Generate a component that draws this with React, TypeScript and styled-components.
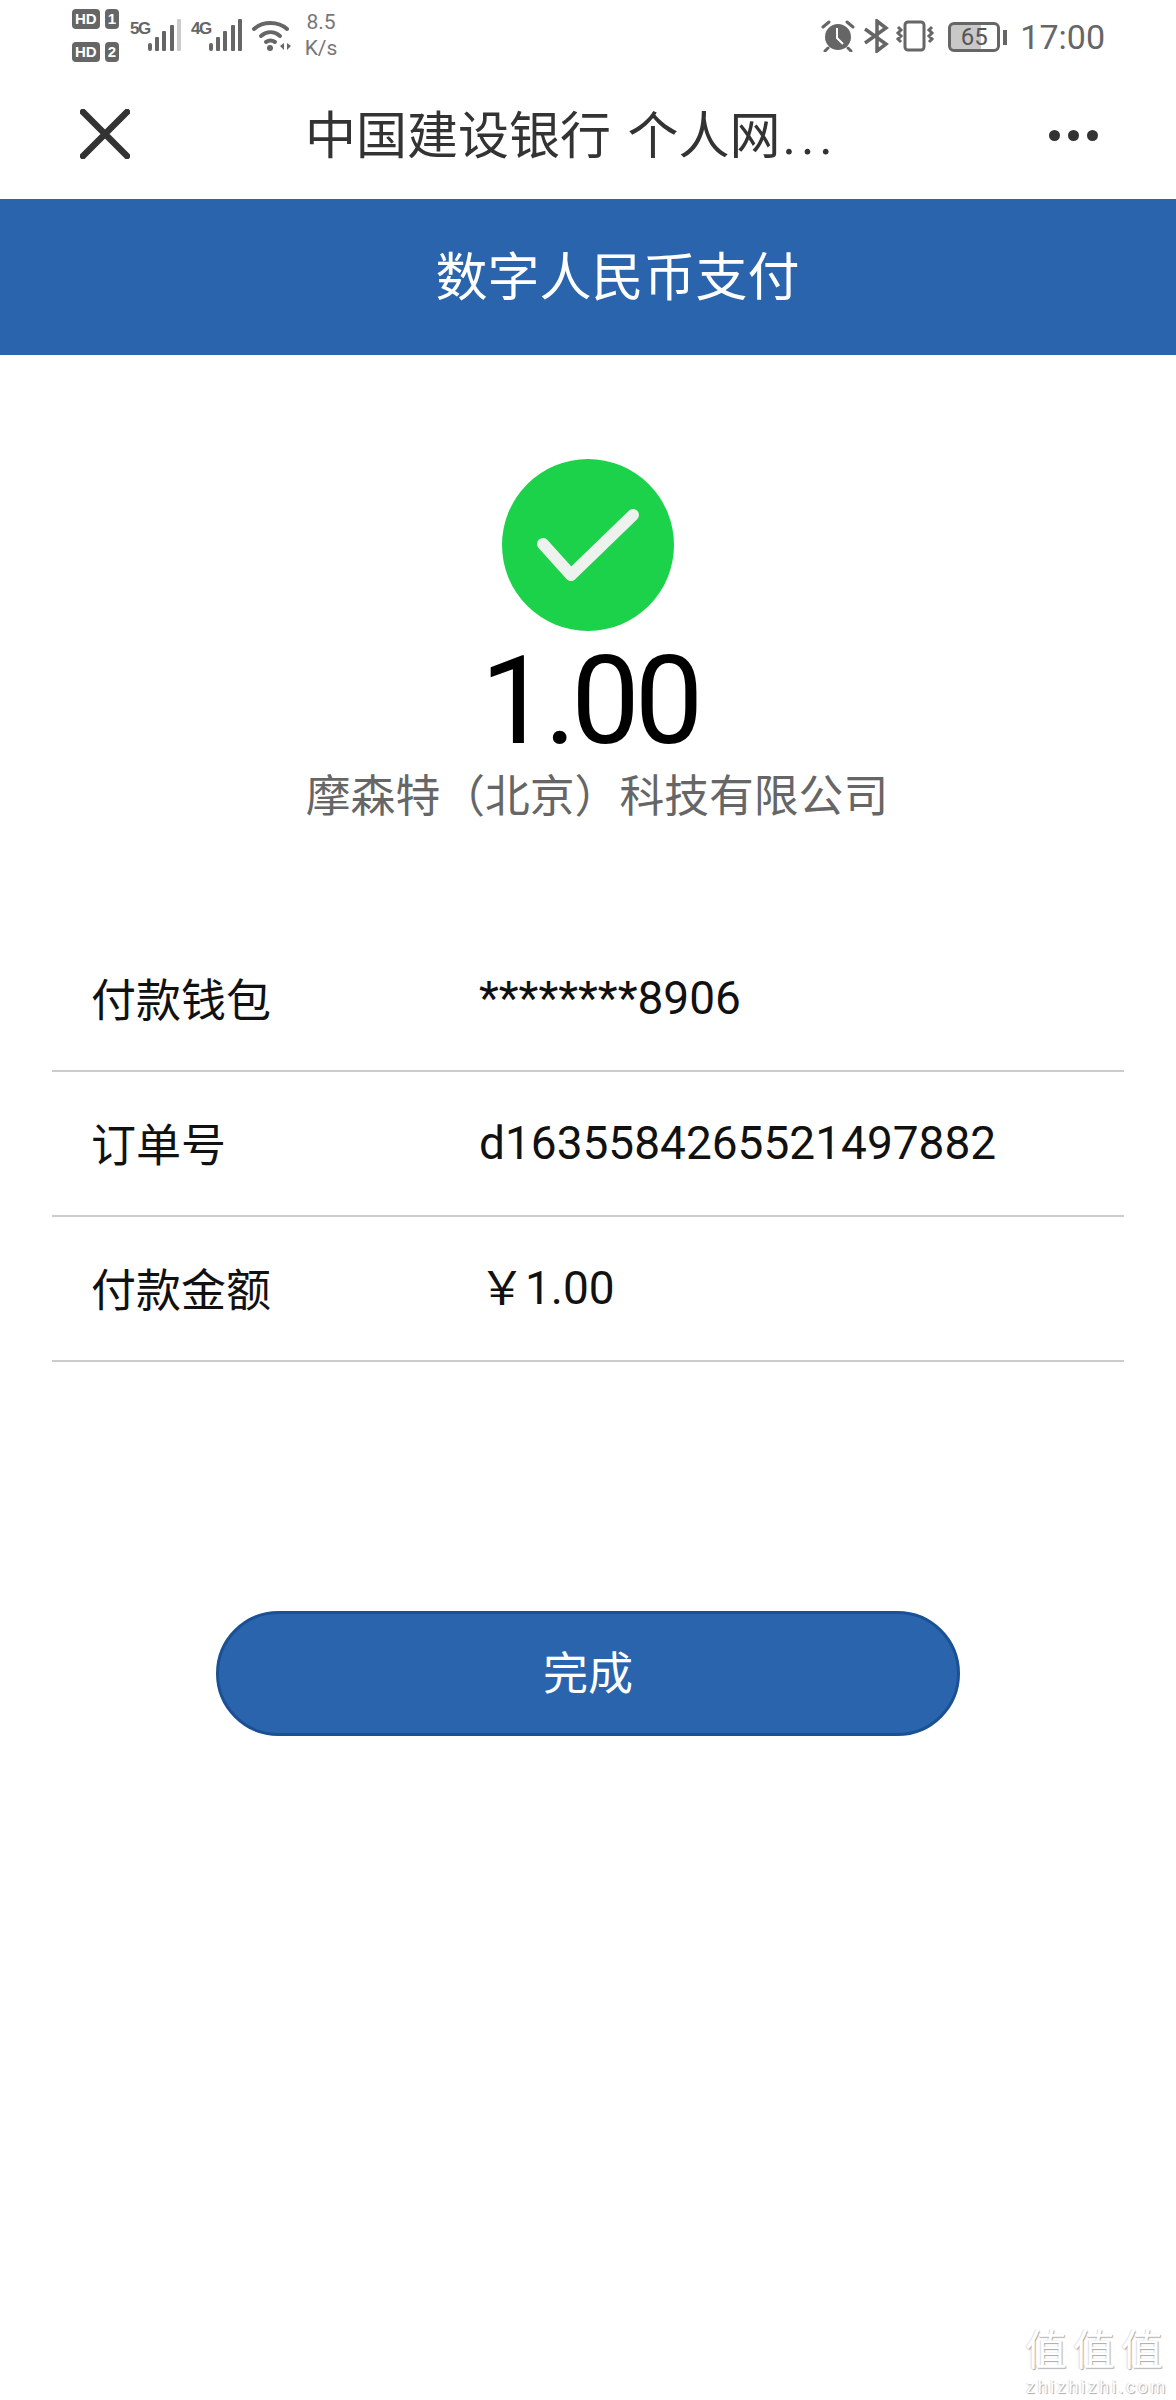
import React from 'react'
import styled, { createGlobalStyle } from 'styled-components'

const GlobalStyle = createGlobalStyle`
  html, body { margin: 0; padding: 0; background: #fff; }
  body { font-family: Roboto, "Noto Sans CJK SC", sans-serif; }
`

const Page = styled.div`
  position: relative;
  width: 1176px;
  height: 2400px;
  overflow: hidden;
  background: #fff;
`

const StatusBar = styled.div`
  height: 72px;
  display: flex;
  align-items: flex-start;
  justify-content: space-between;
  padding: 0 71px 0 72px;
  color: #666;
`

const StatusGroup = styled.div`
  display: flex;
  align-items: center;
  height: 72px;
`

const SimColumn = styled.div`
  display: flex;
  flex-direction: column;
  gap: 13px;
  margin-right: 11px;
  margin-top: -1px;
`

const SimRow = styled.div`
  display: flex;
  gap: 5px;
`

const SimBadge = styled.span<{ $wide?: boolean }>`
  display: block;
  height: 20px;
  padding: 0 3px;
  min-width: ${(p) => (p.$wide ? '20px' : '8px')};
  background: #666;
  color: #fff;
  font: 700 15px/20px "Liberation Sans", sans-serif;
  border-radius: 4px;
  text-align: center;
`

const Signal = styled.div`
  display: flex;
  align-items: flex-start;
  margin-right: 9px;
  margin-top: -3px;
`

const NetLabel = styled.span`
  font: 700 17px/20px "Liberation Sans", sans-serif;
  letter-spacing: -1.5px;
  color: #666;
  width: 18px;
`

const Speed = styled.div`
  margin-left: 11px;
  margin-top: -2px;
  font: 400 21px/26px Roboto, sans-serif;
  color: #777;
  text-align: center;
  width: 36px;
`

const IconGap = styled.span<{ $size: number }>`
  display: block;
  width: ${(p) => p.$size}px;
`

const Clock = styled.span`
  font: 400 34px/40px Roboto, sans-serif;
  color: #666;
  margin-left: 13px;
  margin-top: 1px;
`

const BatteryBox = styled.div`
  width: 52px;
  height: 30px;
  box-sizing: border-box;
  border: 3px solid #666;
  border-radius: 6px;
  margin-left: 13px;
  margin-top: 2px;
  text-align: center;
  font: 400 24px/24px Roboto, sans-serif;
  color: #555;
  background: linear-gradient(90deg, #c8c8c8 65%, #fff 65%);
`

const BatteryNub = styled.div`
  width: 4px;
  height: 15px;
  background: #666;
  margin-left: 3px;
  margin-top: 3px;
`

const NavBar = styled.div`
  height: 127px;
  display: flex;
  align-items: center;
  padding: 0 78px 0 80px;
  box-sizing: border-box;
`

const CloseButton = styled.div`
  width: 50px;
  height: 50px;
  margin-top: -4px;
`

const NavTitle = styled.div`
  flex: 1;
  margin-left: 175px;
  margin-top: -2px;
  font: 400 51px/70px "Noto Sans CJK SC", sans-serif;
  color: #333;
  white-space: nowrap;
  word-spacing: 5px;
`

const TitleDots = styled.span`
  font-family: Roboto, sans-serif;
  letter-spacing: 5px;
  margin-left: 2px;
`

const MoreDots = styled.div`
  display: flex;
  gap: 8px;
  margin-top: -1px;
`

const Dot = styled.span`
  width: 11px;
  height: 11px;
  border-radius: 50%;
  background: #333;
`

const Banner = styled.div`
  height: 156px;
  background: #2a64ad;
  color: #fff;
  display: flex;
  align-items: center;
  justify-content: center;
  font: 400 52px/70px "Noto Sans CJK SC", sans-serif;
  padding-left: 59px;
  padding-bottom: 6px;
  box-sizing: border-box;
`

const Result = styled.div`
  display: flex;
  flex-direction: column;
  align-items: center;
  padding-top: 104px;
`

const SuccessIcon = styled.div`
  width: 172px;
  height: 172px;
  border-radius: 50%;
  background: #1cd24a;
  display: flex;
  align-items: center;
  justify-content: center;
`

const Amount = styled.div`
  font: 400 122px/130px Roboto, sans-serif;
  letter-spacing: -5px;
  color: #000;
  margin-top: 6px;
  margin-left: 3px;
`

const Merchant = styled.div`
  font: 400 44.8px/60px "Noto Sans CJK SC", sans-serif;
  color: #666;
  margin-top: -4px;
  margin-left: 18px;
`

const InfoList = styled.div`
  margin: 104px 52px 0;
`

const InfoRow = styled.div`
  height: 145px;
  box-sizing: border-box;
  display: grid;
  grid-template-columns: 387px 1fr;
  align-items: center;
  padding: 0 38px 2px 40px;
  border-bottom: 2px solid #ccc;
`

const InfoLabel = styled.div`
  font: 400 45px/60px "Noto Sans CJK SC", sans-serif;
  margin-left: -1px;
  color: #111;
`

const InfoValue = styled.div`
  font: 400 46px/60px Roboto, "Noto Sans CJK SC", sans-serif;
  color: #111;
`

const DoneButton = styled.button`
  display: block;
  width: 744px;
  height: 125px;
  margin: 249px 0 0 216px;
  border: 3px solid #1a5094;
  border-radius: 63px;
  background: #2a64ad;
  color: #fff;
  font: 400 45px/60px "Noto Sans CJK SC", sans-serif;
  padding: 0 0 6px;
`

const Watermark = styled.div`
  position: absolute;
  right: 6px;
  bottom: 2px;
  width: 146px;
  text-align: center;
  color: #fff;
  text-shadow: 1px 1px 1px #aaa, -1px 0 1px #ddd;
`

const MarkGlyphs = styled.div`
  font: 400 42px/61px "Noto Sans CJK SC", sans-serif;
  letter-spacing: 6px;
  white-space: nowrap;
`

const MarkSite = styled.div`
  font: 400 18px/21px "Liberation Sans", sans-serif;
  letter-spacing: 2.6px;
`

const SignalBars = ({ dim }: { dim?: boolean }) => (
  <svg width="34" height="32" viewBox="0 0 34 32">
    <rect x="0" y="24" width="4" height="8" rx="2" fill="#666" />
    <rect x="7" y="18" width="4" height="14" rx="1" fill="#666" />
    <rect x="14" y="12" width="4" height="20" rx="1" fill="#666" />
    <rect x="22" y="6" width="4" height="26" rx="1" fill="#666" />
    <rect x="29" y="0" width="4" height="32" rx="1" fill={dim ? '#ccc' : '#666'} />
  </svg>
)

const WifiIcon = () => (
  <svg width="40" height="32" viewBox="0 0 40 32" fill="none" stroke="#666" strokeWidth="4" strokeLinecap="round">
    <path d="M2 9C11 1 26 1 35 9" />
    <path d="M9 16C15 11 22 11 28 16" />
    <path d="M14 22C17 20 20 20 23 22" />
    <circle cx="18" cy="28" r="3" fill="#666" stroke="none" />
    <path d="M28 26l4-3v7zM35 23l4 3-4 4z" fill="#666" stroke="none" />
  </svg>
)

const AlarmIcon = () => (
  <svg width="34" height="32" viewBox="0 0 34 32">
    <circle cx="17" cy="17" r="13" fill="#666" />
    <path d="M2 7l6-5M32 7l-6-5M7 28l-3 3M27 28l3 3" stroke="#666" strokeWidth="3" fill="none" strokeLinecap="round" />
    <path d="M16 8v10l6 6" stroke="#fff" strokeWidth="2" fill="none" />
  </svg>
)

const BluetoothIcon = () => (
  <svg width="25" height="34" viewBox="0 0 25 34" fill="none" stroke="#666" strokeWidth="3.5">
    <path d="M1 10l21 15-9 7V2l9 7L1 24" />
  </svg>
)

const VibrateIcon = () => (
  <svg width="40" height="32" viewBox="0 0 40 32" fill="none" stroke="#666" strokeWidth="3">
    <rect x="10" y="2" width="19" height="28" rx="3" />
    <path d="M3 7l3 3-3 3 3 3-3 3 3 3M37 7l-3 3 3 3-3 3 3 3-3 3" />
  </svg>
)

const App = () => {
  return (
    <Page>
      <GlobalStyle />
      <StatusBar>
        <StatusGroup>
          <SimColumn>
            <SimRow>
              <SimBadge $wide>HD</SimBadge>
              <SimBadge>1</SimBadge>
            </SimRow>
            <SimRow>
              <SimBadge $wide>HD</SimBadge>
              <SimBadge>2</SimBadge>
            </SimRow>
          </SimColumn>
          <Signal>
            <NetLabel>5G</NetLabel>
            <SignalBars dim />
          </Signal>
          <Signal>
            <NetLabel>4G</NetLabel>
            <SignalBars />
          </Signal>
          <WifiIcon />
          <Speed>
            8.5
            <br />
            K/s
          </Speed>
        </StatusGroup>
        <StatusGroup>
          <AlarmIcon />
          <IconGap $size={9} />
          <BluetoothIcon />
          <IconGap $size={6} />
          <VibrateIcon />
          <BatteryBox>65</BatteryBox>
          <BatteryNub />
          <Clock>17:00</Clock>
        </StatusGroup>
      </StatusBar>
      <NavBar>
        <CloseButton>
          <svg width="50" height="50" viewBox="0 0 50 50" stroke="#333" strokeWidth="6.5" strokeLinecap="round">
            <path d="M3 3l44 44M47 3L3 47" />
          </svg>
        </CloseButton>
        <NavTitle>
          中国建设银行 个人网<TitleDots>...</TitleDots>
        </NavTitle>
        <MoreDots>
          <Dot />
          <Dot />
          <Dot />
        </MoreDots>
      </NavBar>
      <Banner>数字人民币支付</Banner>
      <Result>
        <SuccessIcon>
          <svg width="104" height="74" viewBox="0 0 104 74" fill="none" stroke="#eef2ee" strokeWidth="12" strokeLinecap="round" strokeLinejoin="round">
            <path d="M7 36l28 31L97 7" />
          </svg>
        </SuccessIcon>
        <Amount>1.00</Amount>
        <Merchant>摩森特（北京）科技有限公司</Merchant>
      </Result>
      <InfoList>
        <InfoRow>
          <InfoLabel>付款钱包</InfoLabel>
          <InfoValue>********8906</InfoValue>
        </InfoRow>
        <InfoRow>
          <InfoLabel>订单号</InfoLabel>
          <InfoValue>d1635584265521497882</InfoValue>
        </InfoRow>
        <InfoRow>
          <InfoLabel>付款金额</InfoLabel>
          <InfoValue>￥1.00</InfoValue>
        </InfoRow>
      </InfoList>
      <DoneButton>完成</DoneButton>
      <Watermark>
        <MarkGlyphs>值值值</MarkGlyphs>
        <MarkSite>zhizhizhi.com</MarkSite>
      </Watermark>
    </Page>
  )
}

export default App
